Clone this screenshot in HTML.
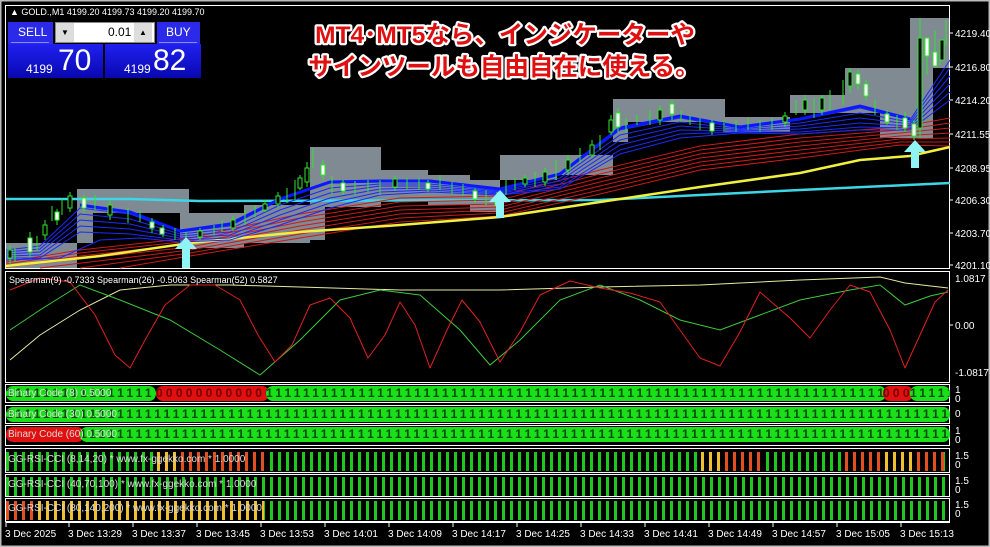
<!DOCTYPE html>
<html><head><meta charset="utf-8"><style>
html,body{margin:0;padding:0;background:#000;}
body{width:990px;height:547px;overflow:hidden;position:relative;font-family:"Liberation Sans",sans-serif;}
svg{position:absolute;left:0;top:0}
.bin{position:absolute;left:6px;width:944px;height:15px;overflow:hidden;}
.bin span{position:absolute;top:0;height:15px;border-radius:7px;font:bold 12px/15px "Liberation Sans",sans-serif;color:#063;letter-spacing:3.25px;white-space:nowrap;overflow:hidden;}
.g{background:#19e019;color:#0a4a0a!important}
.r{background:#e01010;color:#700!important}
.lbl{position:absolute;left:8px;font:10px/15px "Liberation Sans",sans-serif;color:#ddd;}
.bars{position:absolute;left:6px;width:944px;height:19px;}
.tp{position:absolute;color:#fff;}
</style></head><body>
<svg width="990" height="547" viewBox="0 0 990 547">
<rect x="0" y="0" width="990" height="547" fill="none" stroke="#bbb" stroke-width="3"/>
<g fill="none" stroke="#fff" stroke-width="1">
<rect x="5.5" y="5.5" width="944" height="263"/>
<rect x="5.5" y="271.5" width="944" height="111"/>
<rect x="5.5" y="384.5" width="944" height="18"/>
<rect x="5.5" y="405.5" width="944" height="18"/>
<rect x="5.5" y="425.5" width="944" height="20"/>
<rect x="5.5" y="448.5" width="944" height="24"/>
<rect x="5.5" y="474.5" width="944" height="22"/>
<rect x="5.5" y="498.5" width="944" height="23"/>
</g>
<g fill="#7f8a93">
<rect x="6" y="243" width="71" height="25"/>
<rect x="77" y="189" width="112" height="24"/>
<rect x="77" y="213" width="16" height="30"/>
<rect x="180" y="213" width="9" height="30"/>
<rect x="189" y="213" width="55" height="35"/>
<rect x="244" y="205" width="66" height="38"/>
<rect x="310" y="147" width="71" height="60"/>
<rect x="310" y="207" width="15" height="33"/>
<rect x="381" y="170" width="47" height="30"/>
<rect x="428" y="175" width="42" height="30"/>
<rect x="470" y="180" width="30" height="32"/>
<rect x="500" y="155" width="57" height="25"/>
<rect x="557" y="155" width="56" height="20"/>
<rect x="613" y="99" width="112" height="23"/>
<rect x="613" y="122" width="15" height="20"/>
<rect x="725" y="117" width="65" height="15"/>
<rect x="790" y="95" width="55" height="18"/>
<rect x="845" y="68" width="65" height="45"/>
<rect x="880" y="113" width="30" height="25"/>
<rect x="910" y="18" width="23" height="120"/>
<rect x="933" y="18" width="16" height="50"/>
</g>
<polyline fill="none" stroke="#3cd6e6" stroke-width="2.5" points="6,199 130,199 200,201 600,200 700,195 800,190 950,183"/>
<g fill="none" stroke="#d01818" stroke-width="1">
<polyline points="6,262 80,250 190,238 300,214 400,198 500,196 600,170 700,146 800,134 900,127 950,118"/>
<polyline points="6,264 80,253 190,241 300,218 400,202 500,200 600,174 700,150 800,138 900,130 950,123"/>
<polyline points="6,266 80,256 190,244 300,222 400,206 500,204 600,178 700,154 800,142 900,133 950,128"/>
<polyline points="6,267 80,259 190,247 300,226 400,210 500,207 600,182 700,158 800,146 900,136 950,133"/>
<polyline points="40,268 90,262 190,250 300,230 400,214 500,210 600,186 700,162 800,150 900,139 950,138"/>
<polyline points="80,268 190,253 300,234 400,218 500,213 600,190 700,166 800,154 900,142 950,142"/>
<polyline points="120,268 190,256 300,238 400,222 500,216 600,194 700,170 800,158 900,145 950,146"/>
</g>
<polyline fill="none" stroke="#f0f040" stroke-width="2.5" points="6,266 100,256 190,243 300,232 400,225 500,217 600,202 700,187 800,173 860,160 910,156 950,147"/>
<g fill="none" stroke="#1a2aff" stroke-width="1">
<polyline points="6,250 40,246 80,208 130,214 180,232 230,226 280,200 330,183 380,182 430,182 500,190 560,175 620,130 680,118 740,128 800,120 860,108 910,120 950,60"/>
<polyline points="6,252 40,249 80,214 130,219 180,234 230,229 280,205 330,188 380,184 430,184 500,191 560,178 620,135 680,122 740,129 800,123 860,113 910,122 950,68"/>
<polyline points="6,254 40,252 80,220 130,224 180,236 230,232 280,210 330,193 380,186 430,186 500,192 560,181 620,140 680,126 740,130 800,126 860,118 910,124 950,76"/>
<polyline points="6,256 40,255 80,226 130,229 180,238 230,235 280,215 330,198 380,189 430,188 500,193 560,184 620,145 680,130 740,131 800,129 860,123 910,126 950,84"/>
<polyline points="6,258 40,258 80,232 130,234 180,240 230,238 280,220 330,203 380,192 430,190 500,194 560,187 620,150 680,134 740,132 800,132 860,127 910,128 950,92"/>
<polyline points="6,260 60,258 100,240 140,238 180,242 230,240 280,225 330,208 380,195 430,192 500,195 560,189 620,154 680,138 740,133 800,134 860,130 910,130 950,100"/>
</g>
<polyline fill="none" stroke="#0a18ff" stroke-width="3" points="80,205 130,212 180,231 230,224 280,199 330,182 380,181 430,181 500,189 560,174 620,128 680,116 740,127 800,119 860,106 910,119"/>
<g stroke="#2ee82e" stroke-width="1">
<path d="M10 245v20M15 248v14M30 232v25M37 236v15M45 220v20M52 206v15M57 209v16M62 198v17M70 192v20M84 195v18M95 195v15M110 200v20M128 208v15M140 210v12M152 218v15M163 225v12M175 228v12M186 232v10M200 228v12M214 225v10M222 220v12M233 216v15M245 210v15M255 205v12M265 200v12M278 192v15M287 188v15M295 180v20M300 175v15M307 162v25M313 148v20M323 160v20M332 176v18M343 180v15M355 181v14M368 180v12M380 180v15M395 176v15M407 178v12M419 178v12M428 180v12M440 175v15M452 182v12M463 184v12M475 188v15M486 190v15M497 192v20M506 180v15M515 178v12M525 175v12M535 172v15M545 168v18M556 160v20M568 155v20M580 148v15M592 140v18M600 135v15M611 115v20M618 108v25M626 118v15M637 115v10M650 110v15M660 105v20M672 100v20M681 110v12M690 115v10M700 118v12M712 120v15M724 120v12M736 120v12M748 118v12M760 120v12M772 118v12M785 112v15M796 100v15M805 95v20M814 98v20M822 95v20M830 90v20M843 80v25M850 68v25M858 70v20M866 80v20M875 100v15M887 110v15M897 115v15M905 112v20M914 120v20M920 18v120M927 50v25M935 30v30M940 45v20M946 20v25"/>
</g>
<g stroke="#2ee82e" stroke-width="1">
<rect x="8" y="250" width="4" height="8" fill="#000"/><rect x="28" y="238" width="4" height="14" fill="#fff"/><rect x="43" y="225" width="4" height="10" fill="#000"/><rect x="55" y="212" width="4" height="8" fill="#fff"/><rect x="68" y="196" width="4" height="12" fill="#000"/><rect x="82" y="198" width="4" height="10" fill="#fff"/><rect x="108" y="205" width="4" height="10" fill="#000"/><rect x="150" y="222" width="4" height="6" fill="#fff"/><rect x="160" y="228" width="4" height="6" fill="#fff"/><rect x="198" y="231" width="4" height="6" fill="#000"/><rect x="231" y="220" width="4" height="8" fill="#000"/><rect x="263" y="204" width="4" height="6" fill="#000"/><rect x="276" y="196" width="4" height="8" fill="#000"/><rect x="298" y="178" width="4" height="10" fill="#000"/><rect x="305" y="168" width="4" height="14" fill="#000"/><rect x="321" y="165" width="4" height="10" fill="#fff"/><rect x="341" y="183" width="4" height="8" fill="#fff"/><rect x="393" y="179" width="4" height="8" fill="#000"/><rect x="426" y="183" width="4" height="6" fill="#fff"/><rect x="473" y="191" width="4" height="8" fill="#fff"/><rect x="495" y="196" width="4" height="10" fill="#fff"/><rect x="523" y="178" width="4" height="6" fill="#000"/><rect x="543" y="172" width="4" height="10" fill="#000"/><rect x="566" y="160" width="4" height="10" fill="#000"/><rect x="590" y="145" width="4" height="10" fill="#000"/><rect x="609" y="120" width="4" height="12" fill="#000"/><rect x="616" y="113" width="4" height="14" fill="#fff"/><rect x="658" y="110" width="4" height="10" fill="#000"/><rect x="670" y="104" width="4" height="10" fill="#fff"/><rect x="710" y="123" width="4" height="8" fill="#fff"/><rect x="783" y="116" width="4" height="6" fill="#000"/><rect x="803" y="100" width="4" height="10" fill="#000"/><rect x="820" y="98" width="4" height="12" fill="#000"/><rect x="848" y="72" width="4" height="14" fill="#000"/><rect x="856" y="74" width="4" height="10" fill="#fff"/><rect x="864" y="84" width="4" height="12" fill="#fff"/><rect x="885" y="114" width="4" height="8" fill="#fff"/><rect x="903" y="118" width="4" height="10" fill="#fff"/><rect x="912" y="124" width="4" height="12" fill="#fff"/><rect x="918" y="38" width="4" height="90" fill="#000"/><rect x="925" y="38" width="4" height="18" fill="#fff"/><rect x="933" y="52" width="4" height="14" fill="#fff"/><rect x="940" y="40" width="4" height="20" fill="#000"/>
</g>
<g fill="#8ef4f6">
<path d="M186 237 l-11 12 h7 v19 h8 v-19 h7z"/>
<path d="M500 190 l-11 12 h7 v16 h8 v-16 h7z"/>
<path d="M915 140 l-11 12 h7 v16 h8 v-16 h7z"/>
</g>
<g fill="#fff" font-family="Liberation Sans" font-size="10">
<text x="955" y="37">4219.40</text><text x="955" y="71">4216.80</text><text x="955" y="104">4214.20</text><text x="955" y="138">4211.55</text><text x="955" y="172">4208.95</text><text x="955" y="204">4206.30</text><text x="955" y="237">4203.70</text><text x="955" y="269">4201.10</text>
<text x="955" y="282">1.0817</text><text x="955" y="329">0.00</text><text x="955" y="376">-1.0817</text>
<text x="955" y="393">1</text><text x="955" y="402">0</text><text x="955" y="417">0</text>
<text x="955" y="434">1</text><text x="955" y="443">0</text>
<text x="955" y="459">1.5</text><text x="955" y="468">0</text>
<text x="955" y="484">1.5</text><text x="955" y="493">0</text>
<text x="955" y="508">1.5</text><text x="955" y="517">0</text>
</g>
<g stroke="#fff"><path d="M950 33h3M950 67h3M950 100h3M950 134h3M950 168h3M950 200h3M950 233h3M950 265h3M950 325h3"/></g>
<g fill="none" stroke-width="1">
<polyline stroke="#e8e8a0" points="10,360 40,335 80,310 120,290 170,285 230,285 300,287 400,290 500,290 600,287 700,285 800,280 880,277 905,283 948,288"/>
<polyline stroke="#3ec83e" points="10,330 40,310 80,285 120,300 170,320 220,350 260,375 300,340 340,300 380,290 420,295 460,330 490,365 520,340 560,300 600,285 640,300 680,320 720,330 760,315 800,300 850,290 880,285 905,305 930,296 948,292"/>
<polyline stroke="#e02020" stroke-linejoin="round" points="10,290 40,278 70,282 95,315 115,355 130,368 145,340 165,305 190,285 215,285 240,300 258,335 275,362 292,345 310,305 330,298 350,318 368,358 385,335 400,302 415,325 430,368 447,330 462,300 480,322 500,362 520,332 540,295 570,281 600,288 630,293 660,302 680,330 700,358 720,366 740,332 760,292 790,318 810,338 830,310 850,285 870,292 890,330 905,368 920,335 935,302 948,290"/>
</g>
<text x="9" y="283" fill="#fff" font-family="Liberation Sans" font-size="9">Spearman(9) -0.7333  Spearman(26) -0.5063  Spearman(52) 0.5827</text>
<g stroke="#fff"><path d="M6 522v5M69 522v5M133 522v5M197 522v5M261 522v5M325 522v5M389 522v5M453 522v5M517 522v5M581 522v5M645 522v5M709 522v5M773 522v5M837 522v5M901 522v5M6 522.5h944"/></g>
<g fill="#fff" font-family="Liberation Sans" font-size="10">
<text x="5" y="537">3 Dec 2025</text><text x="68" y="537">3 Dec 13:29</text><text x="132" y="537">3 Dec 13:37</text><text x="196" y="537">3 Dec 13:45</text><text x="260" y="537">3 Dec 13:53</text><text x="324" y="537">3 Dec 14:01</text><text x="388" y="537">3 Dec 14:09</text><text x="452" y="537">3 Dec 14:17</text><text x="516" y="537">3 Dec 14:25</text><text x="580" y="537">3 Dec 14:33</text><text x="644" y="537">3 Dec 14:41</text><text x="708" y="537">3 Dec 14:49</text><text x="772" y="537">3 Dec 14:57</text><text x="836" y="537">3 Dec 15:05</text><text x="900" y="537">3 Dec 15:13</text>
</g>
<g font-family="Liberation Sans, Noto Sans CJK JP, sans-serif" font-weight="bold" font-size="24.5" fill="#e01010" stroke="#fff" stroke-width="4.5" stroke-linejoin="round" paint-order="stroke" text-anchor="middle">
<text x="505" y="43">MT4･MT5なら、インジケーターや</text>
<text x="504" y="75">サインツールも自由自在に使える。</text>
</g>
<text x="10" y="15" fill="#fff" font-family="Liberation Sans" font-size="9">▲ GOLD.,M1  4199.20 4199.73 4199.20 4199.70</text>
</svg>

<div style="position:absolute;left:8px;top:22px;width:45px;height:22px;background:#2a2ae8;"></div>
<div class="tp" style="left:18px;top:25px;font-size:12px;">SELL</div>
<div style="position:absolute;left:11px;top:42px;width:38px;height:1px;background:#88f"></div>
<div style="position:absolute;left:55px;top:22px;width:98px;height:19px;background:#fff;border:1px solid #888;"></div>
<div style="position:absolute;left:56px;top:23px;width:18px;height:19px;background:#ddd;color:#000;font-size:8px;text-align:center;line-height:19px">▼</div>
<div style="position:absolute;left:134px;top:23px;width:18px;height:19px;background:#ddd;color:#000;font-size:8px;text-align:center;line-height:19px">▲</div>
<div style="position:absolute;left:108px;top:25px;color:#000;font-size:12px">0.01</div>
<div style="position:absolute;left:157px;top:22px;width:43px;height:22px;background:#2a2ae8;"></div>
<div class="tp" style="left:166px;top:25px;font-size:12px;">BUY</div>
<div style="position:absolute;left:159px;top:42px;width:38px;height:1px;background:#88f"></div>
<div style="position:absolute;left:8px;top:44px;width:95px;height:34px;background:linear-gradient(#2020f0,#0808b0);"></div>
<div style="position:absolute;left:105px;top:44px;width:96px;height:34px;background:linear-gradient(#2020f0,#0808b0);"></div>
<div class="tp" style="left:26px;top:62px;font-size:12px">4199</div>
<div class="tp" style="left:58px;top:44px;font-size:30px;line-height:34px">70</div>
<div class="tp" style="left:124px;top:62px;font-size:12px">4199</div>
<div class="tp" style="left:153px;top:44px;font-size:30px;line-height:34px">82</div>

<div class="bin" style="top:386px">
<span class="g" style="left:0;width:150px">11111111111111111111111</span>
<span class="r" style="left:150px;width:113px">00000000000000000</span>
<span class="g" style="left:260px;width:620px">11111111111111111111111111111111111111111111111111111111111111111111111111111111111111111111111</span>
<span class="r" style="left:877px;width:30px">0000</span>
<span class="g" style="left:904px;width:40px">111111</span>
</div>
<div class="lbl" style="top:386px">Binary Code (8) 0.5000</div>
<div class="bin" style="top:407px"><span class="g" style="left:0;width:944px">111111111111111111111111111111111111111111111111111111111111111111111111111111111111111111111111111111111111111111111111111111111111111111</span></div>
<div class="lbl" style="top:407px">Binary Code (30) 0.5000</div>
<div class="bin" style="top:427px">
<span class="r" style="left:0;width:78px"></span>
<span class="g" style="left:74px;width:870px">111111111111111111111111111111111111111111111111111111111111111111111111111111111111111111111111111111111111111111111111111111111111</span></div>
<div class="lbl" style="top:427px">Binary Code (60) 0.5000</div>

<div class="bars" style="top:452px;background:repeating-linear-gradient(90deg,#1ec81e 0 3px,transparent 3px 8px);"></div>
<div class="bars" style="top:452px;left:157px;width:110px;background:repeating-linear-gradient(90deg,#e05020 0 3px,#000 3px 8px);"></div>
<div class="bars" style="top:452px;left:157px;width:22px;background:repeating-linear-gradient(90deg,#f0c030 0 3px,#000 3px 8px);"></div>
<div class="bars" style="top:452px;left:701px;width:62px;background:repeating-linear-gradient(90deg,#e05020 0 3px,#000 3px 8px);"></div>
<div class="bars" style="top:452px;left:701px;width:22px;background:repeating-linear-gradient(90deg,#f0c030 0 3px,#000 3px 8px);"></div>
<div class="bars" style="top:452px;left:845px;width:99px;background:repeating-linear-gradient(90deg,#e05020 0 3px,#000 3px 8px);"></div>
<div class="bars" style="top:452px;left:885px;width:30px;background:repeating-linear-gradient(90deg,#f0c030 0 3px,#000 3px 8px);"></div>
<div class="lbl" style="top:452px">GG-RSI-CCI (8,14,20) * www.fx-ggekko.com * 1.0000</div>
<div class="bars" style="top:477px;background:repeating-linear-gradient(90deg,#1ec81e 0 3px,transparent 3px 8px);"></div>
<div class="lbl" style="top:477px">GG-RSI-CCI (40,70,100) * www.fx-ggekko.com * 1.0000</div>
<div class="bars" style="top:501px;background:repeating-linear-gradient(90deg,#1ec81e 0 3px,transparent 3px 8px);"></div>
<div class="bars" style="top:501px;width:258px;background:repeating-linear-gradient(90deg,#f0c030 0 3px,#000 3px 8px);"></div>
<div class="bars" style="top:501px;width:30px;background:repeating-linear-gradient(90deg,#e05020 0 3px,#000 3px 8px);"></div>
<div class="lbl" style="top:501px">GG-RSI-CCI (80,140,200) * www.fx-ggekko.com * 1.0000</div>
</body></html>
